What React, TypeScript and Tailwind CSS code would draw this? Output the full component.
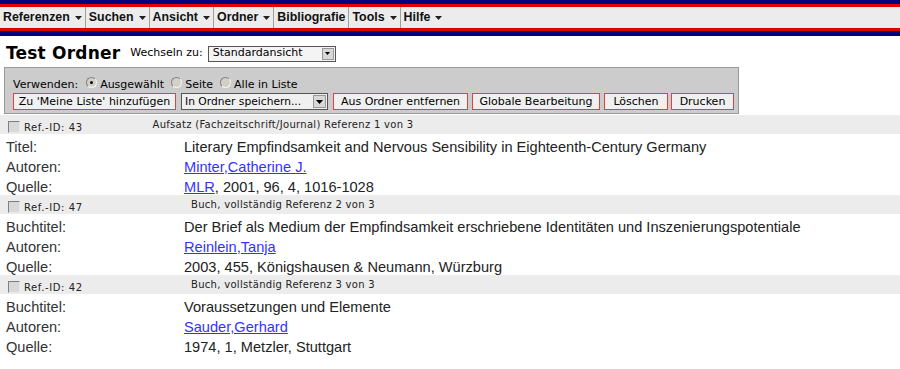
import React from 'react';

const verdana = { fontFamily: 'Verdana, "DejaVu Sans", sans-serif' };

function Caret() {
  return (
    <svg width="7" height="4" viewBox="0 0 7 4" className="ml-[5px] inline-block">
      <path d="M0 0h7L3.5 4z" fill="#222" />
    </svg>
  );
}

function MenuItem({ label, caret = true, last = false }: { label: string; caret?: boolean; last?: boolean }) {
  return (
    <div className={`flex items-center px-[3px] h-full ${last ? '' : 'border-r border-[#a0a0a0]'}`}>
      <span>{label}</span>
      {caret && <Caret />}
    </div>
  );
}

function Radio({ checked }: { checked?: boolean }) {
  return (
    <span className="inline-flex items-center justify-center w-[11px] h-[11px] rounded-full border border-t-[#808080] border-l-[#808080] border-r-[#f4f4f4] border-b-[#f4f4f4] bg-[#d4d0c8] mr-[3px] relative top-[-2px]">
      {checked && <span className="w-[3px] h-[3px] rounded-full bg-black" />}
    </span>
  );
}

function Btn({ children, w }: { children: React.ReactNode; w: string }) {
  return (
    <button className={`${w} h-[17px] border border-[#dc4444] bg-[#f0f0f0] text-[11px] leading-[15px] text-black whitespace-nowrap text-center`}>
      {children}
    </button>
  );
}

function Checkbox() {
  return (
    <span className="inline-block w-[12px] h-[12px] border border-t-[#808080] border-l-[#808080] border-r-[#e8e8e8] border-b-[#e8e8e8] bg-[#d8d8d8]" />
  );
}

type Ref = {
  id: number;
  kind: string;
  rows: { label: string; value: React.ReactNode }[];
};

const link = 'text-[#3333ff] underline';

const refs: Ref[] = [
  {
    id: 43,
    kind: 'Aufsatz (Fachzeitschrift/Journal) Referenz 1 von 3',
    rows: [
      { label: 'Titel:', value: 'Literary Empfindsamkeit and Nervous Sensibility in Eighteenth-Century Germany' },
      { label: 'Autoren:', value: <a className={link}>Minter,Catherine J.</a> },
      { label: 'Quelle:', value: <><a className={link}>MLR</a>, 2001, 96, 4, 1016-1028</> },
    ],
  },
  {
    id: 47,
    kind: 'Buch, vollständig Referenz 2 von 3',
    rows: [
      { label: 'Buchtitel:', value: 'Der Brief als Medium der Empfindsamkeit erschriebene Identitäten und Inszenierungspotentiale' },
      { label: 'Autoren:', value: <a className={link}>Reinlein,Tanja</a> },
      { label: 'Quelle:', value: '2003, 455, Königshausen & Neumann, Würzburg' },
    ],
  },
  {
    id: 42,
    kind: 'Buch, vollständig Referenz 3 von 3',
    rows: [
      { label: 'Buchtitel:', value: 'Voraussetzungen und Elemente' },
      { label: 'Autoren:', value: <a className={link}>Sauder,Gerhard</a> },
      { label: 'Quelle:', value: '1974, 1, Metzler, Stuttgart' },
    ],
  },
];

export default function App() {
  return (
    <div className="w-[900px] h-[369px] bg-white overflow-hidden" style={{ fontFamily: '"Liberation Sans", Arial, sans-serif' }}>
      {/* top menu */}
      <div className="h-[4px] bg-[#000080]" />
      <div className="h-[3px] bg-[#e00000]" />
      <div className="h-[21px] bg-[#ececec] flex items-center text-[12.4px] font-bold text-[#111]">
        <MenuItem label="Referenzen" />
        <MenuItem label="Suchen" />
        <MenuItem label="Ansicht" />
        <MenuItem label="Ordner" />
        <MenuItem label="Bibliografie" caret={false} />
        <MenuItem label="Tools" />
        <MenuItem label="Hilfe" last />
      </div>
      <div className="h-[3px] bg-[#e00000]" />
      <div className="h-[5px] bg-[#000080]" />

      {/* title */}
      <div className="flex items-center pl-[6px] pt-[4px] h-[31px]" style={verdana}>
        <h1 className="text-[17px] font-bold text-black tracking-[0.2px]">Test Ordner</h1>
        <span className="ml-[10px] text-[11px] text-black">Wechseln zu:</span>
        <div className="ml-[5px] w-[128px] h-[16px] border border-[#555] bg-[#f4f4f4] flex items-center justify-between text-[11px]">
          <span className="pl-[4px]">Standardansicht</span>
          <span className="w-[12px] h-[12px] mr-[1px] bg-[#d8d8d8] border border-[#999] flex items-center justify-center">
            <svg width="5" height="3" viewBox="0 0 5 3"><path d="M0 0h5L2.5 3z" fill="#000" /></svg>
          </span>
        </div>
      </div>

      {/* toolbar */}
      <div className="mx-[4px] w-[735px] h-[47px] bg-[#cccccc] border border-[#999] pl-[8px] pt-[9px] text-[11px] text-black" style={verdana}>
        <div className="flex items-center h-[15px] leading-[15px]">
          <span className="mr-[8px]">Verwenden:</span>
          <Radio checked />
          <span className="mr-[7px]">Ausgewählt</span>
          <Radio />
          <span className="mr-[7px]">Seite</span>
          <Radio />
          <span>Alle in Liste</span>
        </div>
        <div className="flex items-center mt-[1px]">
          <Btn w="w-[163px]">Zu 'Meine Liste' hinzufügen</Btn>
          <div className="ml-[5px] w-[147px] h-[17px] border border-[#555] bg-[#f0f0f0] flex items-center justify-between">
            <span className="pl-[3px] whitespace-nowrap text-[10.7px]">In Ordner speichern...</span>
            <span className="w-[13px] h-[13px] mr-[1px] bg-[#d8d8d8] border border-[#999] flex items-center justify-center">
              <svg width="7" height="4" viewBox="0 0 7 4"><path d="M0 0h7L3.5 4z" fill="#000" /></svg>
            </span>
          </div>
          <div className="ml-[5px]"><Btn w="w-[135px]">Aus Ordner entfernen</Btn></div>
          <div className="ml-[4px]"><Btn w="w-[128px]">Globale Bearbeitung</Btn></div>
          <div className="ml-[4px]"><Btn w="w-[64px]">Löschen</Btn></div>
          <div className="ml-[3px]"><Btn w="w-[63px]">Drucken</Btn></div>
        </div>
      </div>

      {/* references */}
      <div className="mt-[1px]">
        {refs.map((r) => (
          <div key={r.id}>
            <div className="h-[19px] bg-[#ececec] grid grid-cols-[150px_266px] items-center text-[10px] tracking-[0.3px] text-[#222] mb-[1px]" style={verdana}>
              <div className="flex items-end pl-[8px] pt-[2px]">
                <Checkbox />
                <span className="ml-[4px] relative top-[2px] tracking-[0.6px]">Ref.-ID: {r.id}</span>
              </div>
              <div className="text-center whitespace-nowrap">{r.kind}</div>
            </div>
            {r.rows.map((row, i) => (
              <div key={i} className="grid grid-cols-[178px_1fr] h-[20px] pt-[4px] leading-[16px] text-[14.6px] pl-[6px]">
                <span className="text-[#333]">{row.label}</span>
                <span className="text-[#222] whitespace-nowrap">{row.value}</span>
              </div>
            ))}
          </div>
        ))}
      </div>
    </div>
  );
}
